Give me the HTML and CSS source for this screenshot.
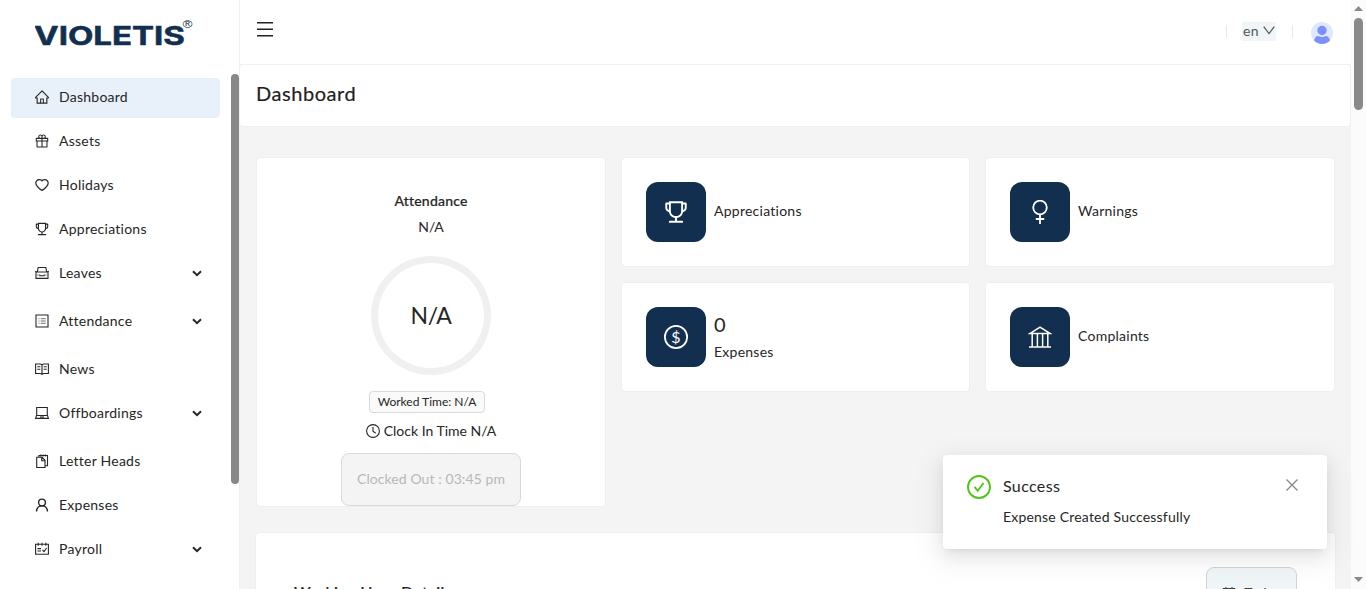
FILE: index.html
```html
<!DOCTYPE html>
<html lang="en">
<head>
<meta charset="utf-8">
<title>Dashboard</title>
<link rel="stylesheet" href="styles.css">
</head>
<body>
<svg width="0" height="0" class="defs">
  <symbol id="trophy" viewBox="64 64 896 896"><path d="M868 160h-92v-40c0-4.400-3.600-8-8-8H256c-4.400 0-8 3.600-8 8v40h-92a44 44 0 00-44 44v148c0 81.700 60 149.600 138.200 162C265.700 630.200 359 721.700 476 734.500v105.200H280c-17.700 0-32 14.300-32 32V904c0 4.400 3.600 8 8 8h512c4.400 0 8-3.600 8-8v-32.300c0-17.700-14.300-32-32-32H548V734.500C665 721.700 758.300 630.200 773.800 514 852 501.600 912 433.700 912 352V204a44 44 0 00-44-44zM184 352V232h64v207.600a91.990 91.990 0 01-64-87.600zm520 128c0 49.100-19.100 95.400-53.900 130.100-34.800 34.800-81 53.900-130.100 53.900h-16c-49.100 0-95.400-19.100-130.100-53.900-34.800-34.800-53.900-81-53.900-130.100V184h384v296zm136-128c0 41-26.900 75.800-64 87.600V232h64v120z"/></symbol>
  <symbol id="calendar" viewBox="64 64 896 896"><path fill="none" stroke="currentColor" stroke-width="72" d="M148 220h728v656H148zM148 440h728M320 120v190M704 120v190"/></symbol>
</svg>
<div class="app">
  <aside class="sidebar">
    <div class="brand">
      <svg width="160" height="32" viewBox="0 0 160 32"><text class="brand-name" x="-1" y="27.500" textLength="151" lengthAdjust="spacingAndGlyphs">VIOLETIS</text><text class="brand-mark" x="147.500" y="10.500" textLength="10" lengthAdjust="spacingAndGlyphs">®</text></svg>
    </div>
    <div class="side-body">
      <nav class="menu">
        <a class="item active"><svg class="ic" viewBox="64 64 896 896"><path d="M946.500 505L560.100 118.800l-25.900-25.900a31.500 31.500 0 00-44.400 0L77.500 505a63.900 63.900 0 00-18.800 46c.4 35.200 29.700 63.300 64.900 63.300h42.500V940h691.800V614.300h43.400c17.100 0 33.200-6.700 45.300-18.800a63.600 63.600 0 0018.700-45.300c0-17-6.700-33.100-18.800-45.200zM568 868H456V664h112v204zm217.900-325.700V868H632V640c0-22.100-17.900-40-40-40H432c-22.100 0-40 17.900-40 40v228H238.100V542.300h-96l370-369.700 23.100 23.100L882 542.300h-96.100z"/></svg><span>Dashboard</span></a>
        <a class="item"><svg class="ic" viewBox="64 64 896 896"><path d="M880 310H732.400c13.600-21.400 21.600-46.800 21.600-74 0-76.100-61.900-138-138-138-41.400 0-78.700 18.400-104 47.400-25.300-29-62.600-47.400-104-47.400-76.100 0-138 61.900-138 138 0 27.200 7.900 52.600 21.600 74H144c-17.700 0-32 14.300-32 32v200c0 4.400 3.600 8 8 8h40v344c0 17.700 14.300 32 32 32h640c17.700 0 32-14.300 32-32V550h40c4.400 0 8-3.600 8-8V342c0-17.700-14.300-32-32-32zm-334-74c0-38.600 31.400-70 70-70s70 31.400 70 70-31.400 70-70 70h-70v-70zm-138-70c38.600 0 70 31.400 70 70v70h-70c-38.600 0-70-31.400-70-70s31.400-70 70-70zM180 482V378h298v104H180zm48 68h250v308H228V550zm568 308H546V550h250v308zm48-376H546V378h298v104z"/></svg><span>Assets</span></a>
        <a class="item"><svg class="ic" viewBox="64 64 896 896"><path d="M923 283.600a260.040 260.040 0 00-56.900-82.800 264.400 264.400 0 00-84-55.500A265.340 265.340 0 00679.700 125c-49.300 0-97.400 13.500-139.200 39-10 6.100-19.500 12.800-28.500 20.100-9-7.300-18.500-14-28.500-20.100-41.800-25.500-89.900-39-139.200-39-35.500 0-69.900 6.800-102.400 20.300-31.400 13-59.700 31.700-84 55.500a258.440 258.440 0 00-56.900 82.800c-13.900 32.300-21 66.600-21 101.900 0 33.300 6.800 68 20.300 103.300 11.300 29.500 27.500 60.100 48.200 91 32.800 48.900 77.900 99.900 133.900 151.600 92.800 85.700 184.700 144.900 188.600 147.300l23.700 15.200c10.500 6.700 24 6.700 34.500 0l23.700-15.200c3.900-2.500 95.700-61.600 188.600-147.300 56-51.700 101.100-102.700 133.900-151.600 20.700-30.900 37-61.500 48.200-91 13.500-35.300 20.300-70 20.300-103.300.1-35.300-7-69.600-20.900-101.900zM512 814.800S156 586.700 156 385.500C156 283.600 240.300 201 344.300 201c73.100 0 136.500 40.800 167.700 100.400C543.200 241.800 606.600 201 679.700 201c104 0 188.300 82.600 188.300 184.500 0 201.200-356 429.300-356 429.300z"/></svg><span>Holidays</span></a>
        <a class="item"><svg class="ic"><use href="#trophy"/></svg><span>Appreciations</span></a>
        <a class="item sub"><svg class="ic line" viewBox="0 0 14 14"><path d="M1 6v6.400h12V6M.2 5.200l1.600.8h10.400l1.600-.8M2.300 5.800 3.200 1.500h7.600l.9 4.300M4.800 8.400v1.400h4.400V8.400M2.500 9h1M10.500 9h1"/></svg><span>Leaves</span><svg class="chev" viewBox="0 0 10 7"><path d="m1 1.200 4 4 4-4"/></svg></a>
        <a class="item sub"><svg class="ic line" viewBox="0 0 14 14"><path d="M1 1h12v12H1z"/><path class="faint" d="M3.500 4.700h1M5.700 4.700h5M3.500 7h1M5.700 7h5M3.500 9.300h1M5.700 9.300h5"/></svg><span>Attendance</span><svg class="chev" viewBox="0 0 10 7"><path d="m1 1.200 4 4 4-4"/></svg></a>
        <a class="item"><svg class="ic line" viewBox="0 0 14 14"><path d="M7 2.900C6.500 2.200 5.800 2 5 2H.6v9.500H5c.8 0 1.500.2 2 .8.5-.6 1.200-.8 2-.8h4.400V2H9c-.8 0-1.500.2-2 .9zM7 3v9M2.300 4.800h3M2.300 7.300h3M8.700 4.800h3M8.700 7.300h3"/></svg><span>News</span></a>
        <a class="item sub"><svg class="ic line" viewBox="0 0 14 14"><path d="M1.700 1.500h10.600v8H1.700zM1.500 9.500.6 12.400h12.800l-.9-2.900M5 11h4"/></svg><span>Offboardings</span><svg class="chev" viewBox="0 0 10 7"><path d="m1 1.200 4 4 4-4"/></svg></a>
        <a class="item"><svg class="ic line" viewBox="0 0 14 14"><path d="M1.700 3.300h5.500l2.800 3v7.200H1.700zM6.700 3.500v3.200H10M3.900 3V1.500h8.600v10.200H10M5.800.5v2M8.100.5v2M10.400.5v2"/></svg><span>Letter Heads</span></a>
        <a class="item"><svg class="ic line user" viewBox="0 0 14 14"><circle cx="7" cy="4.500" r="3.400"/><path d="M1.500 13.500C1.700 10 4 7.900 7 7.900s5.300 2.100 5.500 5.600"/></svg><span>Expenses</span></a>
        <a class="item sub"><svg class="ic line" viewBox="0 0 14 14"><path d="M.6 2.300h12.800v9.900H.6zM3.200.8v3M7 .8v3M10.800.8v3M2.500 6.600H6M2.500 9H6M7.500 8l1.500 1.600 2.600-3.600"/></svg><span>Payroll</span><svg class="chev" viewBox="0 0 10 7"><path d="m1 1.200 4 4 4-4"/></svg></a>
      </nav>
      <div class="side-scroll"></div>
    </div>
  </aside>
  <main class="main">
    <header class="topbar">
      <svg class="burger" viewBox="0 0 16 15"><path d="M0 .7h16M0 7.200h16M0 13.800h16"/></svg>
      <div class="tools">
        <i class="rule"></i>
        <div class="lang"><span>en</span><svg viewBox="0 0 12 9"><path d="m.7.600 5.300 7 5.300-7"/></svg></div>
        <i class="rule"></i>
        <svg class="avatar" viewBox="0 0 22 22"><circle cx="11" cy="11" r="11" fill="#dfe8ff"/><circle cx="11" cy="8.500" r="4.700" fill="#7b8fff"/><path d="M3 18.500C3.600 15.800 5 14 7.300 14c2.500 1.200 4.900 1.200 7.400 0 2.300 0 3.700 1.800 4.300 4.500C17 20.800 14 22 11 22s-6-1.200-8-3.500z" fill="#7b8fff"/></svg>
      </div>
    </header>
    <div class="page-head"><h1>Dashboard</h1></div>
    <div class="content">
      <div class="grid">
        <section class="card attend">
          <h2>Attendance</h2>
          <p class="status">N/A</p>
          <div class="ring">N/A</div>
          <span class="tag">Worked Time: N/A</span>
          <div class="clock"><svg class="ic line" viewBox="0 0 14 14"><circle cx="7" cy="7" r="6.400"/><path d="M7 3v4.300l2.700 1.900"/></svg><span>Clock In Time N/A</span></div>
          <button class="out" disabled>Clocked Out : 03:45 pm</button>
        </section>
        <div class="stats">
          <section class="card stat"><div class="tile"><svg><use href="#trophy"/></svg></div><div class="label">Appreciations</div></section>
          <section class="card stat"><div class="tile"><svg viewBox="0 0 24 24"><g class="tl"><circle cx="12" cy="7.500" r="6.800"/><path d="M12 14.500V24M7.800 19h8.400"/></g></svg></div><div class="label">Warnings</div></section>
          <section class="card stat"><div class="tile"><svg viewBox="0 0 24 24"><circle class="tl" cx="12" cy="12" r="11.100"/><text x="12" y="17.500" class="dollar">$</text></svg></div><div class="label"><b>0</b>Expenses</div></section>
          <section class="card stat"><div class="tile"><svg viewBox="0 0 24 24"><path class="tl thin" d="M1.800 8.600 12 2.200l10.200 6.400zM1 22h22M4.200 9v13M9.400 9v13M14.600 9v13M19.800 9v13"/></svg></div><div class="label">Complaints</div></section>
        </div>
      </div>
      <section class="card hours">
        <h3>Working Hour Details</h3>
        <button class="today"><svg class="ic"><use href="#calendar"/></svg><span>Today</span></button>
      </section>
    </div>
  </main>
  <div class="scroll">
    <svg viewBox="0 0 9 5"><path d="M4.500 0 9 5H0z"/></svg>
    <div class="thumb"></div>
    <svg class="down" viewBox="0 0 9 5"><path d="M0 0h9L4.500 5z"/></svg>
  </div>
</div>
<div class="toast">
  <svg class="ok" viewBox="0 0 24 24"><circle cx="12" cy="12" r="11"/><path d="m7.500 11.800 3.300 4 5.700-7.800"/></svg>
  <div class="msg"><div class="msg-title">Success</div><div class="msg-text">Expense Created Successfully</div></div>
  <svg class="close" viewBox="0 0 12 12"><path d="m.5.500 11 11M11.500.500l-11 11"/></svg>
</div>
</body>
</html>
```
FILE: styles.css
```css
* { box-sizing: border-box; }
body { margin: 0; height: 589px; overflow: hidden; font: 14px/22px Lato, "Open Sans", sans-serif; letter-spacing: .25px; color: #262626; background: #f4f4f4; }
h1, h2, h3, p { margin: 0; font-weight: 400; }
.defs { position: absolute; }
svg { display: block; flex: none; fill: currentColor; }
.app { display: flex; height: 589px; overflow: hidden; }

.sidebar { width: 240px; flex: none; display: flex; flex-direction: column; background: #fff; border-right: 1px solid #f0f0f0; }
.brand { height: 74px; flex: none; padding: 17px 0 0 35px; color: #132f4f; }
.brand-name { font: 700 25.500px Inter, "Liberation Sans", sans-serif; letter-spacing: 0; stroke: #132f4f; stroke-width: .5; }
.brand-mark { font: 10.500px "Liberation Sans", sans-serif; letter-spacing: 0; }
.side-body { display: flex; justify-content: space-between; flex: 1; min-height: 0; }
.menu { width: 220px; padding: 4px 0 0 11px; display: flex; flex-direction: column; gap: 4px; }
.item { height: 40px; flex: none; display: flex; align-items: center; padding: 0 18px 2px 24px; gap: 10px; border-radius: 4px; }
.item.active { background: #e8f0fa; }
.item.sub { margin-bottom: 4px; }
.ic { width: 14px; height: 14px; }
.line { fill: none; stroke: currentColor; stroke-width: 1.100; }
.faint { stroke-width: .9; opacity: .75; }
.user { stroke-width: 1.400; }
.chev { width: 10px; height: 7px; margin-left: auto; fill: none; stroke: currentColor; stroke-width: 2; }
.side-scroll { width: 8px; height: 410px; border-radius: 4px; background: #888; }

.main { flex: 1; min-width: 0; display: flex; flex-direction: column; }
.topbar { height: 65px; flex: none; display: flex; justify-content: space-between; background: #fff; border-bottom: 1px solid #f0f0f0; padding: 22px 18px 0 17px; }
.burger { width: 16px; height: 15px; margin-top: -.5px; stroke: #222; stroke-width: 1.500; }
.tools { display: flex; align-items: flex-start; }
.rule { width: 1px; height: 13px; margin-top: 3px; background: #e8e8e8; }
.lang { display: flex; align-items: center; gap: 4px; width: 34px; height: 19px; margin: 0 16px 0 15px; padding: 0 0 2px 1px; background: #f0f5f8; color: #555; }
.lang svg { width: 12px; height: 9px; fill: none; stroke: #555; stroke-width: 1.200; }
.avatar { width: 22px; height: 22px; margin-left: 18px; }
.page-head { height: 62px; flex: none; padding: 13px 16px; background: #fff; border: solid #f0f0f0; border-width: 0 1px 1px 0; border-radius: 4px; }
h1 { font-size: 20px; line-height: 30px; letter-spacing: .55px; color: #1f1f1f; -webkit-text-stroke: .2px; }
.content { padding: 30px 15px 0; flex: 1; min-height: 0; }
.grid { display: grid; grid-template-columns: 350px 1fr; gap: 15px; padding: 0 0 0 1px; align-items: start; }
.card { background: #fff; border: 1px solid #efefef; border-radius: 4px; }
.attend { height: 350px; display: flex; flex-direction: column; align-items: center; padding-top: 32px; }
.attend h2 { font-size: 14px; line-height: 22px; font-weight: 500; letter-spacing: .2px; -webkit-text-stroke: .2px; }
.status { margin-top: 4px; letter-spacing: -.1px; }
.ring { width: 120px; height: 120px; margin-top: 18px; border: 7px solid #f0f0f0; border-radius: 50%; display: grid; place-items: center; font-size: 23px; letter-spacing: -.4px; padding-bottom: 1px; }
.tag { height: 22px; margin: 16px 8px 0 0; padding: 0 7.500px; border: 1px solid #d9d9d9; border-radius: 4px; background: #fafafa; font-size: 12px; line-height: 20px; letter-spacing: 0; }
.clock { display: flex; align-items: center; gap: 4px; margin-top: 7px; letter-spacing: 0; }
.out { width: 180px; height: 53px; flex: none; margin-top: 11px; padding: 0 0 2px; border: 1px solid #d9d9d9; border-radius: 8px; background: #f4f4f4; color: #b8b8b8; font: inherit; letter-spacing: .08px; }
.stats { display: grid; grid-template-columns: 349px 350px; gap: 15px; }
.stat { height: 110px; display: flex; align-items: center; gap: 8px; padding-left: 24px; }
.label { padding-bottom: 2px; }
.stat b { display: block; margin-top: -2px; font-size: 20px; line-height: 32px; font-weight: 400; padding-bottom: 1px; }
.tile { width: 60px; height: 60px; display: grid; place-items: center; border-radius: 12px; background: #132f4f; color: #fff; }
.tile svg { width: 24px; height: 24px; }
.tl { fill: none; stroke: #fff; stroke-width: 1.800; }
.thin { stroke-width: 1.500; }
.dollar { font-size: 16px; letter-spacing: 0; text-anchor: middle; }
.hours { height: 120px; margin-top: 25px; padding: 34px 37px; display: flex; justify-content: space-between; }
h3 { font-size: 16px; line-height: 24px; margin: 13px 0 0 1px; font-weight: 500; letter-spacing: .25px; -webkit-text-stroke: .2px; }
.today { width: 91px; height: 51px; display: flex; align-items: center; justify-content: center; gap: 8px; margin-right: 1px; padding: 0; border: 1px solid #d2d5d7; border-radius: 8px; background: #f0f5f8; color: #444; font: inherit; }

.scroll { width: 15px; flex: none; display: flex; flex-direction: column; align-items: center; padding: 6px 0 7px; background: #fbfbfb; color: #888; }
.scroll svg { width: 9px; height: 5px; }
.thumb { width: 9px; height: 92px; margin-top: 7px; border-radius: 5px; background: #8a8a8a; }
.scroll .down { margin-top: auto; }

.toast { position: absolute; left: 943px; top: 455px; width: 384px; height: 94px; display: flex; padding: 20px 29px 20px 24px; background: #fff; border-radius: 4px; box-shadow: 0 6px 16px rgba(0,0,0,.08), 0 3px 6px -4px rgba(0,0,0,.12), 0 9px 28px 8px rgba(0,0,0,.05); }
.ok { width: 24px; height: 24px; fill: none; stroke: #52c41a; stroke-width: 1.900; }
.msg { margin-left: 12px; }
.msg-title { font-size: 16px; line-height: 24px; margin: -1px 0 8px; letter-spacing: .35px; }
.msg-text { letter-spacing: .2px; }
.close { width: 12px; height: 12px; margin: 4px 0 0 auto; stroke: #888; stroke-width: 1.300; }
```
